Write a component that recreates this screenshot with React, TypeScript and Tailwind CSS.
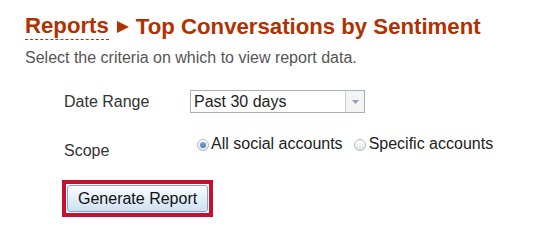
import React from "react";

const Radio = ({ checked }: { checked?: boolean }) => (
  <span className="flex h-[12px] w-[12px] shrink-0 items-center justify-center rounded-full border border-[#b4b9c0] bg-gradient-to-b from-[#ffffff] to-[#e3e6ea]">
    {checked && (
      <span className="h-[6px] w-[6px] rounded-full bg-gradient-to-b from-[#7fa3cf] to-[#4f7fb8]" />
    )}
  </span>
);

const App = () => {
  return (
    <div
      className="min-h-[227px] w-[535px] bg-white pl-[25px] pt-[13px]"
      style={{ fontFamily: '"Liberation Sans", Arial, sans-serif' }}
    >
      <h1 className="flex items-center text-[22.2px] font-bold leading-[26px] text-[#b13100]">
        <span className="border-b border-dashed border-[#b13100] leading-[26px]">
          Reports
        </span>
        <svg width="12" height="12" viewBox="0 0 12 12" className="ml-[8px] mr-[7px] mt-[1px]">
          <polygon points="0,0 12,6 0,12" fill="#b13100" />
        </svg>
        <span>Top Conversations by Sentiment</span>
      </h1>

      <p className="mt-[9px] text-[16px] leading-[18px] text-[#555555]">
        Select the criteria on which to view report data.
      </p>

      <div className="ml-[39px] mt-[23px] text-[16px] text-[#333333]">
        <div className="flex h-[23px] items-center">
          <label className="w-[126px] leading-[23px]">Date Range</label>
          <div className="flex h-[23px] w-[175px] items-stretch border border-[#a9b0bb] bg-white">
            <span className="flex-1 pl-[3px] leading-[21px] text-[#222222]">Past 30 days</span>
            <span className="flex w-[19px] items-center justify-center border-l border-[#c9ced6] bg-[#f3f4f6]">
              <svg width="7" height="4" viewBox="0 0 7 4">
                <polygon points="0,0 7,0 3.5,4" fill="#8fa0b8" />
              </svg>
            </span>
          </div>
        </div>

        <div className="mt-[22px] flex items-start">
          <label className="mt-[7px] w-[126px] leading-[18px]">Scope</label>
          <div className="flex items-center leading-[18px] text-[#222222]">
            <span className="ml-[7px] mr-[2px] mt-[2px]">
              <Radio checked />
            </span>
            <span>All social accounts</span>
            <span className="ml-[11px] mr-[3px] mt-[2px]">
              <Radio />
            </span>
            <span>Specific accounts</span>
          </div>
        </div>

        <div className="ml-[-2px] mt-[20px] flex w-fit border-[4px] border-[#c8102e] p-[1px]">
          <button className="h-[27px] rounded-[3px] border border-[#8fa5bd] bg-gradient-to-b from-[#fbfdff] to-[#cfe0f3] px-[10px] text-[16px] leading-[23px] text-[#111111]">
            Generate Report
          </button>
        </div>
      </div>
    </div>
  );
};

export default App;
